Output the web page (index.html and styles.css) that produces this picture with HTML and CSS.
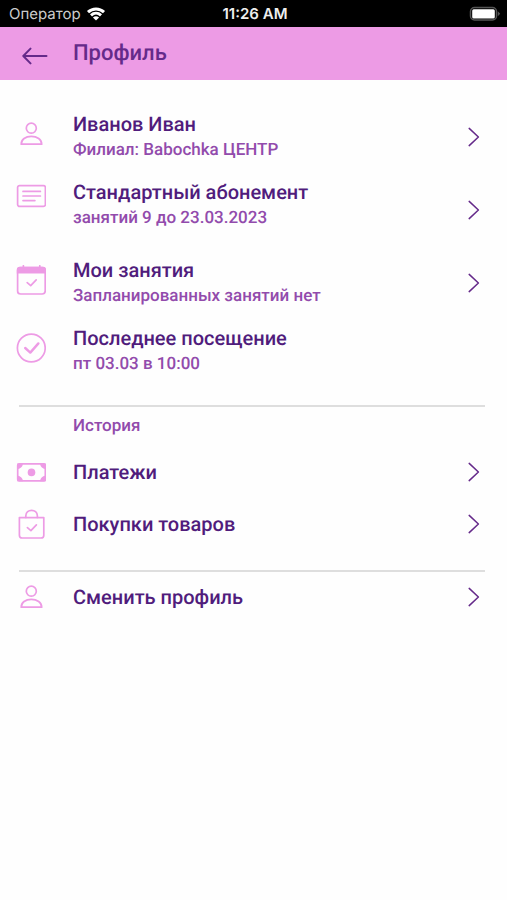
FILE: index.html
```html
<!DOCTYPE html>
<html lang="ru">
<head>
<meta charset="utf-8">
<meta name="viewport" content="width=device-width, initial-scale=1">
<title>Профиль</title>
<link rel="stylesheet" href="styles.css">
</head>
<body>
<svg class="sprite" aria-hidden="true">
  <symbol id="person" viewBox="0 0 30 30">
    <circle cx="15.3" cy="9.2" r="5" />
    <path d="M5.2 25.2C5.2 20.4 9.5 17.4 15.3 17.4S25.7 20.4 25.7 25.2Z" />
  </symbol>
  <symbol id="chevron" viewBox="0 0 12 20">
    <path d="M1.2 1.4L10.4 10L1.2 18.6" />
  </symbol>
</svg>

<div class="status">
  <div class="carrier">
    <span>Оператор</span>
    <svg class="wifi" viewBox="0 0 20 16" aria-hidden="true">
      <path d="M2 6.2C6.5 1.9 13.5 1.9 18 6.2" />
      <path d="M5 9.3C7.9 6.6 12.1 6.6 15 9.3" />
      <path class="dot" d="M10 14.6L6.9 11.5C8.7 9.9 11.3 9.9 13.1 11.5Z" />
    </svg>
  </div>
  <time class="clock">11:26 AM</time>
  <svg class="battery" viewBox="0 0 32 16" aria-hidden="true">
    <rect class="case" x="1.5" y="1.5" width="26" height="12.5" rx="4" />
    <rect class="charge" x="3.2" y="3.2" width="22.6" height="9.2" rx="1.5" />
    <path class="tip" d="M28.8 5.2L31.2 7.7L28.8 10.2Z" />
  </svg>
</div>

<header class="bar">
  <button class="back" type="button" aria-label="Назад">
    <svg viewBox="0 0 26 18" aria-hidden="true"><path d="M24.5 9H1.5M8.5 1.6L1.3 9L8.5 16.4" /></svg>
  </button>
  <h1>Профиль</h1>
</header>

<main>
  <ul class="list">
    <li>
      <a class="row card" href="#profile">
        <svg class="icon" aria-hidden="true"><use href="#person" /></svg>
        <span class="text"><strong>Иванов Иван</strong><span>Филиал: Babochka ЦЕНТР</span></span>
        <svg class="chevron" aria-hidden="true"><use href="#chevron" /></svg>
      </a>
    </li>
    <li>
      <a class="row card raised" href="#membership">
        <svg class="icon short" viewBox="0 0 30 24" aria-hidden="true">
          <rect x="1.6" y="1.6" width="27.8" height="20.8" rx="2" />
          <path d="M7 7.4H24.4M7 12H24.4M7 16.6H18.9" />
        </svg>
        <span class="text"><strong>Стандартный абонемент</strong><span>занятий 9 до 23.03.2023</span></span>
        <svg class="chevron" aria-hidden="true"><use href="#chevron" /></svg>
      </a>
    </li>
    <li>
      <a class="row card" href="#lessons">
        <svg class="icon" viewBox="0 0 30 30" aria-hidden="true">
          <rect x="1.6" y="2.6" width="27.6" height="26.4" rx="3" />
          <path class="solid" d="M.8 8.6V4.6Q.8 1.8 3.6 1.8H27.2Q30 1.8 30 4.6V8.6Z" />
          <path d="M7.4 .8V3M23.8 .8V3" />
          <path d="M11.2 17.6L14.7 20.6L20.2 14.8" />
        </svg>
        <span class="text"><strong>Мои занятия</strong><span>Запланированных занятий нет</span></span>
        <svg class="chevron" aria-hidden="true"><use href="#chevron" /></svg>
      </a>
    </li>
    <li class="row card raised">
      <svg class="icon" viewBox="0 0 30 30" aria-hidden="true">
        <circle cx="15.3" cy="15" r="13.9" />
        <path class="bold" d="M9.2 15L14.3 19.6L22.4 10.4" />
      </svg>
      <span class="text"><strong>Последнее посещение</strong><span>пт 03.03 в 10:00</span></span>
    </li>
  </ul>

  <section class="group">
    <h2>История</h2>
    <ul class="list">
      <li>
        <a class="row" href="#payments">
          <svg class="icon" viewBox="0 0 30 30" aria-hidden="true">
            <rect x="1.7" y="6.9" width="27.6" height="17" rx="1.5" />
            <circle class="solid" cx="15.5" cy="15.4" r="3.8" />
            <path class="solid" d="M1.4 6.6H7Q6.5 11.2 1.4 12.2ZM29.6 6.6H24Q24.5 11.2 29.6 12.2ZM1.4 24.2H7Q6.5 19.6 1.4 18.6ZM29.6 24.2H24Q24.5 19.6 29.6 18.6Z" />
          </svg>
          <span class="text"><strong>Платежи</strong></span>
          <svg class="chevron" aria-hidden="true"><use href="#chevron" /></svg>
        </a>
      </li>
      <li>
        <a class="row" href="#purchases">
          <svg class="icon" viewBox="0 0 30 30" aria-hidden="true">
            <path d="M3.4 8.6H27.8V26.2Q27.8 29 25 29H6.2Q3.4 29 3.4 26.2Z" />
            <path d="M9.8 8.4V7C9.8-.6 21.4-.6 21.4 7V8.4" />
            <path d="M11.4 18.6L14.9 21.6L20.4 15.8" />
          </svg>
          <span class="text"><strong>Покупки товаров</strong></span>
          <svg class="chevron" aria-hidden="true"><use href="#chevron" /></svg>
        </a>
      </li>
    </ul>
  </section>

  <section class="group switch">
    <a class="row" href="#switch">
      <svg class="icon" aria-hidden="true"><use href="#person" /></svg>
      <span class="text"><strong>Сменить профиль</strong></span>
      <svg class="chevron" aria-hidden="true"><use href="#chevron" /></svg>
    </a>
  </section>
</main>
</body>
</html>
```
FILE: styles.css
```css
:root {
  --title: #501c7c;
  --sub: #924bac;
  --pink: #ed9be5;
  --arrow: #652a8a;
}

* {
  box-sizing: border-box;
}

body {
  margin: 0;
  background: #fefefe;
  color: var(--title);
  font-family: Roboto, "Noto Sans", sans-serif;
  font-weight: 500;
  text-rendering: geometricPrecision;
}

svg {
  display: block;
  fill: none;
  stroke: currentColor;
  stroke-linecap: round;
  stroke-linejoin: round;
}

.sprite {
  display: none;
}

.status {
  display: grid;
  grid-template-columns: 1fr auto 1fr;
  align-items: center;
  height: 27px;
  padding: 0 6px 0 9px;
  background: #000;
  color: #eee;
  font: 400 15px/27px Inter, "Liberation Sans", sans-serif;
}

.carrier {
  display: flex;
  align-items: center;
  gap: 5px;
  color: #ccc;
}

.wifi {
  width: 20px;
  height: 16px;
  color: #fff;
  stroke-width: 3;
  stroke-linecap: butt;
}

.wifi .dot {
  fill: #fff;
  stroke: none;
}

.clock {
  font-weight: 600;
}

.battery {
  width: 32px;
  height: 16px;
  justify-self: end;
}

.battery .case {
  stroke: #555;
  stroke-width: 1.5;
}

.battery .charge {
  fill: #fff;
  stroke: none;
}

.battery .tip {
  fill: #555;
  stroke: none;
}

.bar {
  display: flex;
  align-items: center;
  gap: 23px;
  height: 53px;
  padding: 0 20px;
  background: var(--pink);
  color: var(--arrow);
}

.back {
  padding: 4px 2px 0;
  border: 0;
  background: none;
  color: inherit;
}

.back svg {
  width: 26px;
  height: 18px;
  stroke-width: 2;
}

h1 {
  margin: 0;
  font-size: 22px;
  font-weight: 500;
  line-height: 28px;
}

main {
  padding-top: 20px;
}

.list {
  margin: 0;
  padding: 0;
  list-style: none;
}

.row {
  display: grid;
  grid-template-columns: 30px 1fr 12px;
  column-gap: 27px;
  align-items: center;
  min-height: 52px;
  padding: 0 27px 0 16px;
  color: inherit;
  text-decoration: none;
}

.card {
  min-height: 73px;
}

.card .text,
.card .icon {
  align-self: start;
}

.card .text {
  margin-top: 11px;
}

.card .icon {
  margin-top: 19px;
}

.raised .text {
  margin-top: 6px;
}

.raised .icon {
  margin-top: 14px;
}

.icon {
  width: 30px;
  height: 30px;
  color: var(--pink);
  stroke-width: 1.7;
}

.raised .short {
  height: 24px;
  margin-top: 11px;
}

.icon .solid {
  fill: currentColor;
  stroke: none;
}

.icon .bold {
  stroke-width: 2.4;
}

.text {
  display: grid;
  font-size: 17px;
  line-height: 26px;
  color: var(--sub);
}

.text strong {
  color: var(--title);
  font-size: 20px;
  font-weight: 500;
}

.chevron {
  width: 12px;
  height: 20px;
  color: var(--arrow);
  stroke-width: 1.5;
}

.group {
  margin-top: 13px;
}

.group::before {
  content: "";
  display: block;
  height: 2px;
  margin: 0 22px 0 19px;
  background: #dedede;
}

.switch {
  margin-top: 20px;
}

.switch .row {
  min-height: 50px;
}

h2 {
  margin: 0;
  padding: 6px 27px 7px 73px;
  color: var(--sub);
  font-size: 17px;
  font-weight: 500;
  line-height: 26px;
}
```
